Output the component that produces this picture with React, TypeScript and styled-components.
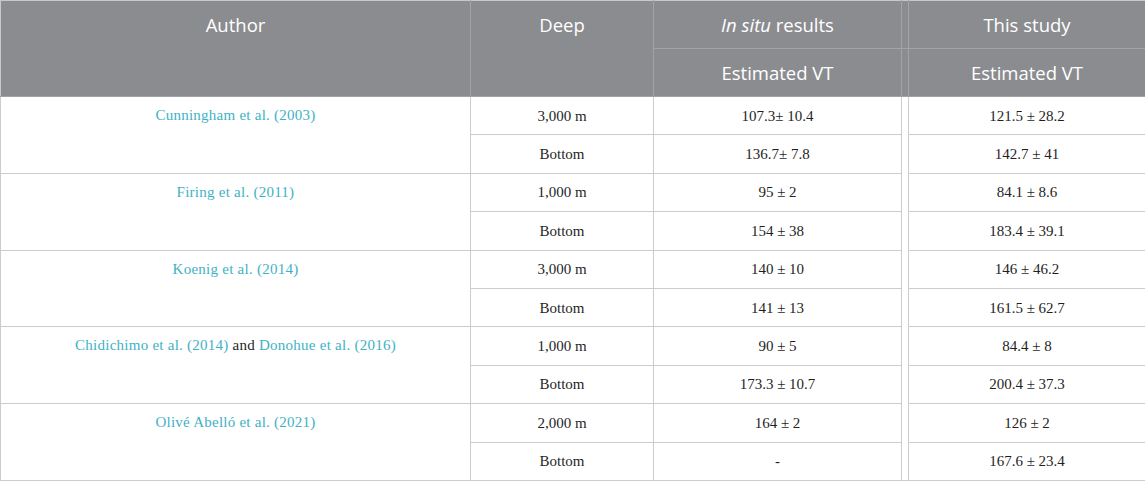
import React from "react";
import styled, { createGlobalStyle } from "styled-components";

const Global = createGlobalStyle`
  html, body { margin: 0; padding: 0; background: #ffffff; }
  #root { width: 1145px; height: 481px; overflow: hidden; }
`;

const Table = styled.table`
  width: 1145px;
  border-collapse: collapse;
  table-layout: fixed;
  font-family: "Liberation Serif", "Times New Roman", serif;
`;

const HeadCell = styled.th<{ $top?: boolean }>`
  background: #8b8c90;
  color: #ffffff;
  font-family: "Open Sans", "Noto Sans", sans-serif;
  font-weight: 400;
  font-size: 18.5px;
  line-height: 24px;
  text-align: center;
  vertical-align: ${(p) => (p.$top ? "top" : "middle")};
  padding: ${(p) => (p.$top ? "12px 0 0" : "0")};
  height: 47px;
  border: 1px solid #a2a3a7;
  border-top-color: #c8c8c8;
  &:first-child { border-left-color: #c8c8c8; }
  &:last-child { border-right-color: #c8c8c8; }
`;

const SpacerHead = styled.th`
  background: #8b8c90;
  padding: 0;
  border: 1px solid #a2a3a7;
  border-top-color: #c8c8c8;
`;

const Cell = styled.td`
  color: #1f1f1f;
  font-size: 15px;
  line-height: 20px;
  text-align: center;
  vertical-align: middle;
  height: 37.4px;
  padding: 0;
  border: 1px solid #cccccc;
`;

const AuthorCell = styled(Cell)`
  vertical-align: top;
  padding-top: 8px;
  letter-spacing: 0.25px;
`;

const Spacer = styled.td`
  padding: 0;
  border-left: 1px solid #cccccc;
  border-right: 1px solid #cccccc;
  border-bottom: 1px solid #cccccc;
`;

const Ref = styled.span`
  color: #3eb2c4;
`;

type Row = { deep: string; insitu: string; study: string };
type Group = { author: React.ReactNode; rows: [Row, Row] };

const groups: Group[] = [
  {
    author: <Ref>Cunningham et al. (2003)</Ref>,
    rows: [
      { deep: "3,000 m", insitu: "107.3± 10.4", study: "121.5 ± 28.2" },
      { deep: "Bottom", insitu: "136.7± 7.8", study: "142.7 ± 41" },
    ],
  },
  {
    author: <Ref>Firing et al. (2011)</Ref>,
    rows: [
      { deep: "1,000 m", insitu: "95 ± 2", study: "84.1 ± 8.6" },
      { deep: "Bottom", insitu: "154 ± 38", study: "183.4 ± 39.1" },
    ],
  },
  {
    author: <Ref>Koenig et al. (2014)</Ref>,
    rows: [
      { deep: "3,000 m", insitu: "140 ± 10", study: "146 ± 46.2" },
      { deep: "Bottom", insitu: "141 ± 13", study: "161.5 ± 62.7" },
    ],
  },
  {
    author: (
      <>
        <Ref>Chidichimo et al. (2014)</Ref> and <Ref>Donohue et al. (2016)</Ref>
      </>
    ),
    rows: [
      { deep: "1,000 m", insitu: "90 ± 5", study: "84.4 ± 8" },
      { deep: "Bottom", insitu: "173.3 ± 10.7", study: "200.4 ± 37.3" },
    ],
  },
  {
    author: <Ref>Olivé Abelló et al. (2021)</Ref>,
    rows: [
      { deep: "2,000 m", insitu: "164 ± 2", study: "126 ± 2" },
      { deep: "Bottom", insitu: "-", study: "167.6 ± 23.4" },
    ],
  },
];

export default function App() {
  return (
    <>
      <Global />
      <Table>
        <colgroup>
          <col style={{ width: 470 }} />
          <col style={{ width: 183 }} />
          <col style={{ width: 248 }} />
          <col style={{ width: 7 }} />
          <col style={{ width: 237 }} />
        </colgroup>
        <thead>
          <tr>
            <HeadCell rowSpan={2} $top>Author</HeadCell>
            <HeadCell rowSpan={2} $top>Deep</HeadCell>
            <HeadCell>
              <i>In situ</i> results
            </HeadCell>
            <SpacerHead />
            <HeadCell>This study</HeadCell>
          </tr>
          <tr>
            <HeadCell>Estimated VT</HeadCell>
            <SpacerHead />
            <HeadCell>Estimated VT</HeadCell>
          </tr>
        </thead>
        <tbody>
          {groups.map((g, gi) =>
            g.rows.map((r, ri) => (
              <tr key={`${gi}-${ri}`}>
                {ri === 0 && <AuthorCell rowSpan={2}>{g.author}</AuthorCell>}
                <Cell>{r.deep}</Cell>
                <Cell>{r.insitu}</Cell>
                {gi === 0 && ri === 0 && <Spacer rowSpan={10} />}
                <Cell>{r.study}</Cell>
              </tr>
            ))
          )}
        </tbody>
      </Table>
    </>
  );
}
